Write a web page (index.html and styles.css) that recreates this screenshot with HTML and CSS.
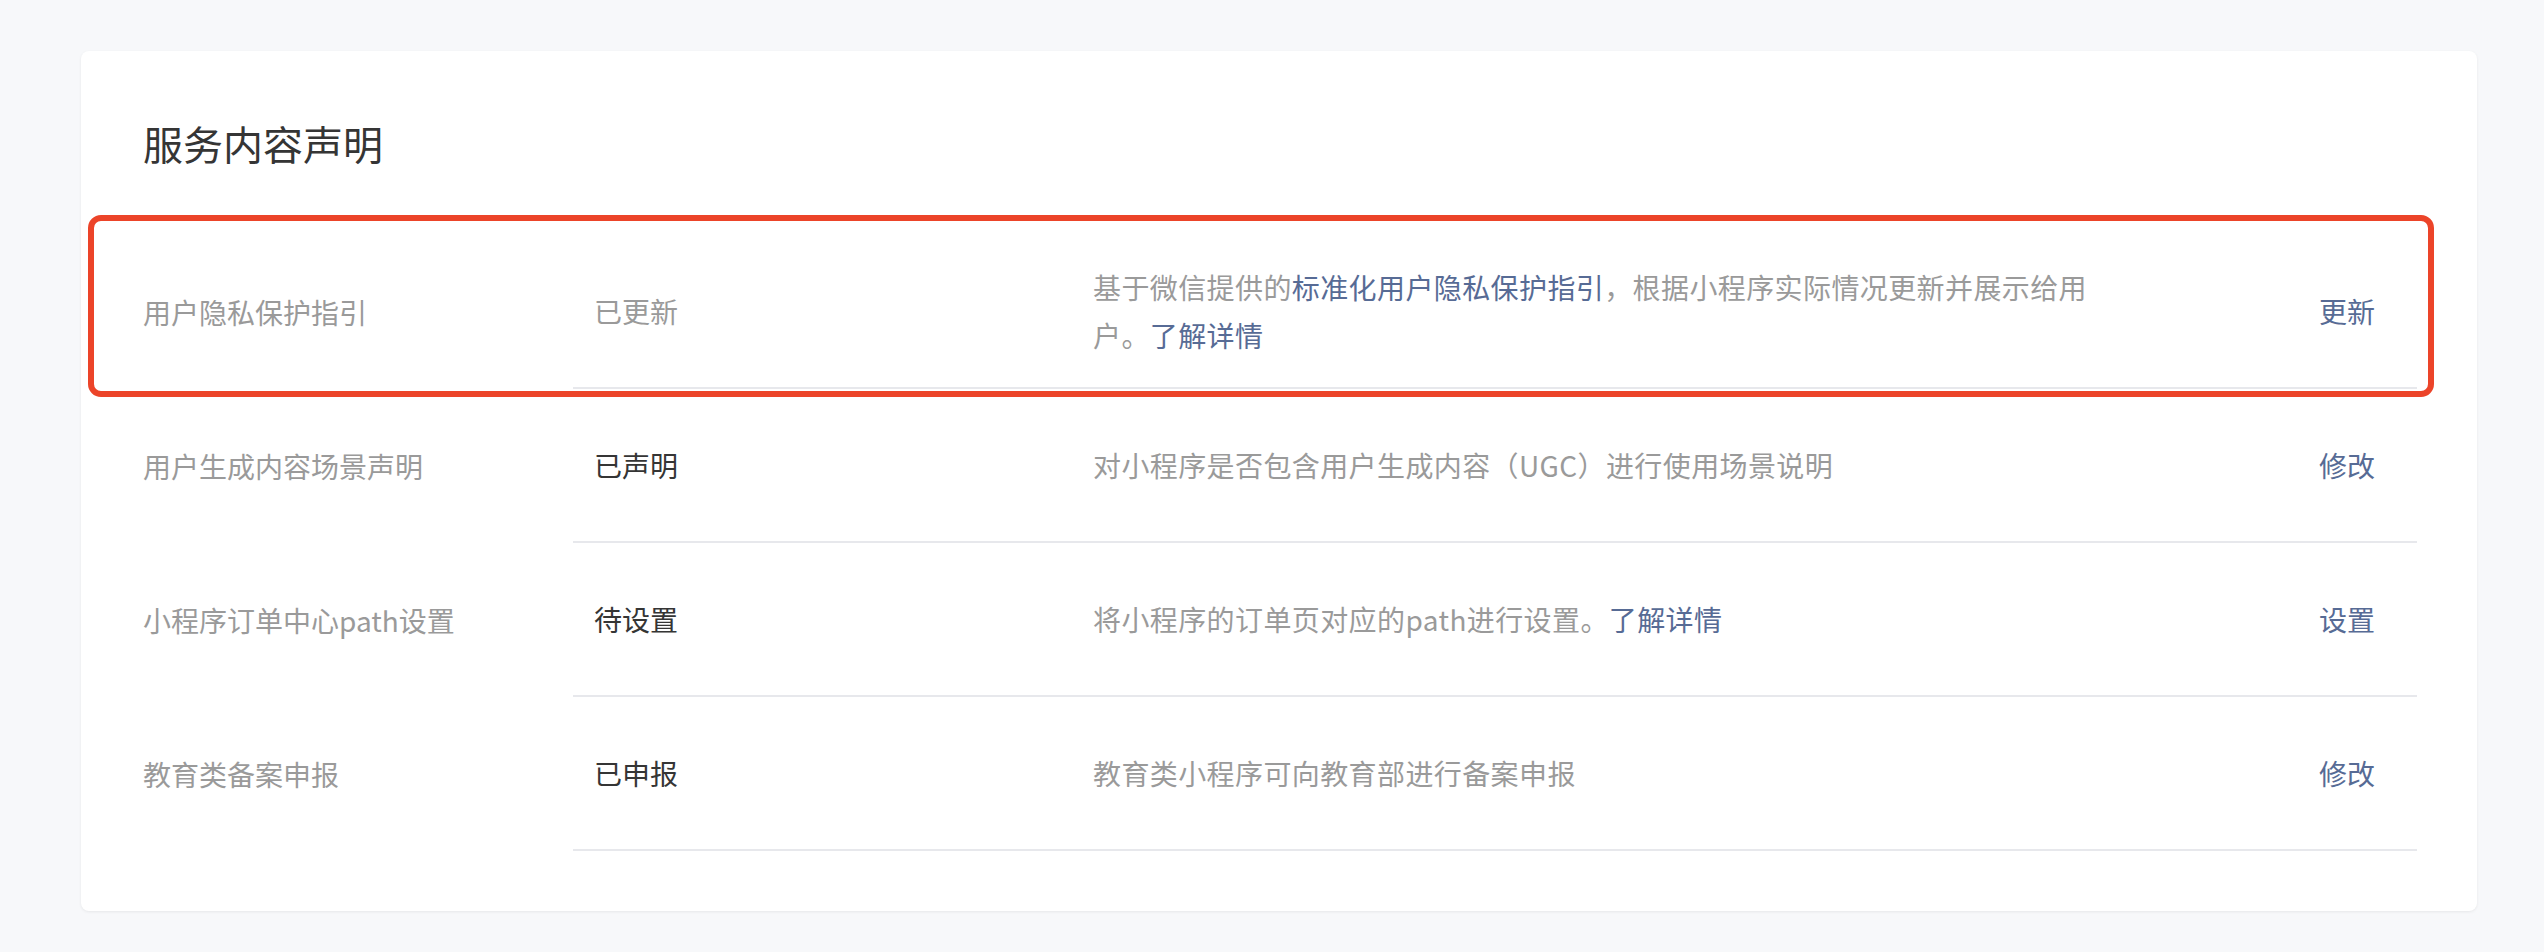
FILE: index.html
```html
<!DOCTYPE html>
<html lang="zh-CN">
<head>
<meta charset="utf-8">
<title>服务内容声明</title>
<link rel="stylesheet" href="styles.css">
</head>
<body>
<div class="page">
  <section class="card">
    <h2 class="card-title">服务内容声明</h2>
    <div class="list">
      <div class="row row-highlight">
        <div class="label">用户隐私保护指引</div>
        <div class="content">
          <div class="status status-muted">已更新</div>
          <div class="desc">基于微信提供的<a class="link" href="#">标准化用户隐私保护指引</a>，根据小程序实际情况更新并展示给用户。<a class="link" href="#">了解详情</a></div>
          <div class="action"><a class="link" href="#">更新</a></div>
        </div>
        <div class="highlight-box"></div>
      </div>
      <div class="row">
        <div class="label">用户生成内容场景声明</div>
        <div class="content">
          <div class="status">已声明</div>
          <div class="desc">对小程序是否包含用户生成内容（UGC）进行使用场景说明</div>
          <div class="action"><a class="link" href="#">修改</a></div>
        </div>
      </div>
      <div class="row">
        <div class="label">小程序订单中心path设置</div>
        <div class="content">
          <div class="status">待设置</div>
          <div class="desc">将小程序的订单页对应的path进行设置。<a class="link" href="#">了解详情</a></div>
          <div class="action"><a class="link" href="#">设置</a></div>
        </div>
      </div>
      <div class="row">
        <div class="label">教育类备案申报</div>
        <div class="content">
          <div class="status">已申报</div>
          <div class="desc">教育类小程序可向教育部进行备案申报</div>
          <div class="action"><a class="link" href="#">修改</a></div>
        </div>
      </div>
    </div>
  </section>
</div>
</body>
</html>
```

FILE: styles.css
```css
html, body {
  margin: 0;
  padding: 0;
}

body {
  background: #f7f8fa;
  font-family: "Noto Sans CJK SC", "Noto Sans", sans-serif;
  color: #353535;
}

.page {
  padding: 51px 67px 40px 81px;
}

.card {
  width: 2396px;
  box-sizing: border-box;
  background: #ffffff;
  border-radius: 8px;
  box-shadow: 0 1px 3px rgba(0, 0, 0, 0.07);
  padding: 64px 60px 60px 62px;
}

.card-title {
  margin: 0 0 64px 0;
  font-size: 40px;
  line-height: 56px;
  font-weight: 400;
  color: #353535;
}

.list {
  display: flex;
  flex-direction: column;
}

.row {
  position: relative;
  display: grid;
  grid-template-columns: 430px 1fr;
  align-items: stretch;
}

.label {
  display: flex;
  align-items: center;
  font-size: 28px;
  line-height: 48px;
  color: #9a9a9a;
}

.content {
  display: flex;
  align-items: center;
  min-height: 152px;
  border-bottom: 2px solid #e7e8ec;
  font-size: 28px;
  line-height: 48px;
}

.status {
  width: 499px;
  flex: none;
  padding-left: 21px;
  color: #353535;
}

.status-muted {
  color: #9a9a9a;
}

.desc {
  width: 1000px;
  flex: none;
  color: #9a9a9a;
  letter-spacing: 0.4px;
}

.action {
  flex: 1;
  text-align: right;
  padding-right: 42px;
}

.link {
  color: #576b95;
  text-decoration: none;
}

.highlight-box {
  position: absolute;
  top: -20px;
  left: -55px;
  right: -17px;
  bottom: -8px;
  border: 6px solid #ec4429;
  border-radius: 13px;
  pointer-events: none;
}
```
